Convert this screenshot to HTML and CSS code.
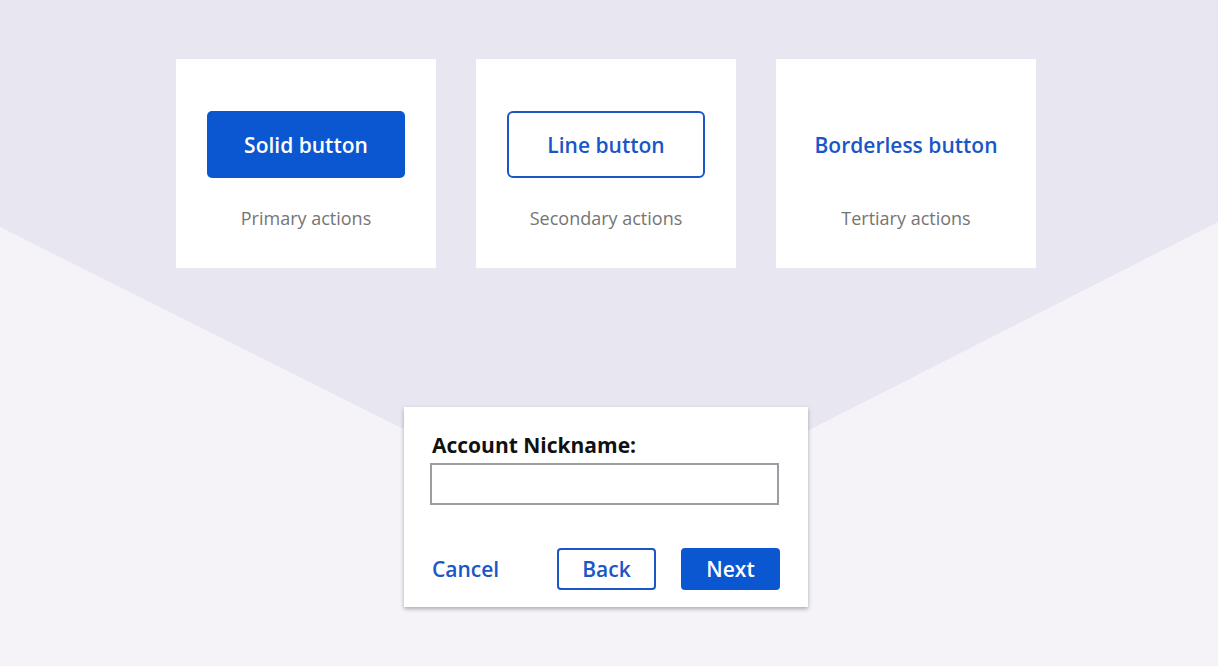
FILE: index.html
```html
<!DOCTYPE html>
<html lang="en">
<head>
<meta charset="utf-8">
<title>Button hierarchy</title>
<link rel="stylesheet" href="styles.css">
</head>
<body>
<div class="backdrop"></div>
<main class="page">
  <section class="cards">
    <div class="card">
      <button class="btn btn-solid btn-lg">Solid button</button>
      <p class="caption">Primary actions</p>
    </div>
    <div class="card">
      <button class="btn btn-line btn-lg">Line button</button>
      <p class="caption">Secondary actions</p>
    </div>
    <div class="card">
      <button class="btn btn-borderless btn-lg">Borderless button</button>
      <p class="caption">Tertiary actions</p>
    </div>
  </section>
  <section class="dialog">
    <label class="label" for="nick">Account Nickname:</label>
    <input class="field" id="nick" type="text">
    <div class="actions">
      <button class="btn btn-borderless btn-sm cancel">Cancel</button>
      <div class="actions-right">
        <button class="btn btn-line btn-sm">Back</button>
        <button class="btn btn-solid btn-sm">Next</button>
      </div>
    </div>
  </section>
</main>
</body>
</html>
```

FILE: styles.css
```css
html, body {
  margin: 0;
  padding: 0;
}
body {
  width: 1218px;
  height: 666px;
  overflow: hidden;
  background: #e8e6f1;
  font-family: "Open Sans", "Noto Sans", sans-serif;
  position: relative;
}
.backdrop {
  position: absolute;
  inset: 0;
  background: #f6f3f8;
  clip-path: polygon(0 227px, 609px 532px, 1218px 222px, 1218px 666px, 0 666px);
  z-index: 0;
}
.page {
  position: relative;
  z-index: 1;
  padding-top: 59px;
}
.cards {
  display: flex;
  gap: 40px;
  padding-left: 176px;
}
.card {
  width: 260px;
  height: 209px;
  background: #fff;
  display: flex;
  flex-direction: column;
  align-items: center;
  box-sizing: border-box;
  padding-top: 52px;
}
.btn {
  font-family: "Open Sans", "Noto Sans", sans-serif;
  font-weight: 600;
  box-sizing: border-box;
  display: flex;
  align-items: center;
  justify-content: center;
  margin: 0;
  padding: 0;
  cursor: pointer;
}
.btn-lg {
  width: 198px;
  height: 67px;
  font-size: 21px;
  border-radius: 5px;
}
.btn-sm {
  width: 99px;
  height: 42px;
  font-size: 21px;
  border-radius: 4px;
}
.btn-solid {
  background: #0b56d1;
  color: #fff;
  border: none;
}
.btn-line {
  background: #fff;
  color: #1a56c8;
  border: 2px solid #1a56c8;
}
.btn-line.btn-lg {
  border-width: 2.5px;
  border-radius: 6px;
}
.btn-borderless {
  background: transparent;
  color: #1a56c8;
  border: none;
}
.caption {
  margin: 28px 0 0;
  font-size: 18px;
  line-height: 24px;
  color: #757575;
}
.dialog {
  margin: 139px 0 0 404px;
  width: 404px;
  height: 200px;
  background: #fff;
  box-shadow: 0 2px 4px rgba(0, 0, 0, 0.3);
  box-sizing: border-box;
  padding: 24px 29px 0 26px;
  display: flex;
  flex-direction: column;
}
.label {
  display: block;
  font-size: 21px;
  line-height: 28px;
  font-weight: 700;
  color: #111;
  padding-left: 2px;
}
.field {
  margin-top: 4px;
  width: 349px;
  height: 42px;
  box-sizing: border-box;
  border: 2px solid #9e9ca2;
  background: #fff;
  padding: 0 8px;
  font-family: inherit;
  font-size: 18px;
  outline: none;
}
.actions {
  margin-top: 43px;
  display: flex;
  align-items: center;
  justify-content: space-between;
  width: 350px;
}
.cancel {
  width: auto;
  padding-left: 2px;
}
.actions-right {
  display: flex;
  gap: 25px;
}
```
